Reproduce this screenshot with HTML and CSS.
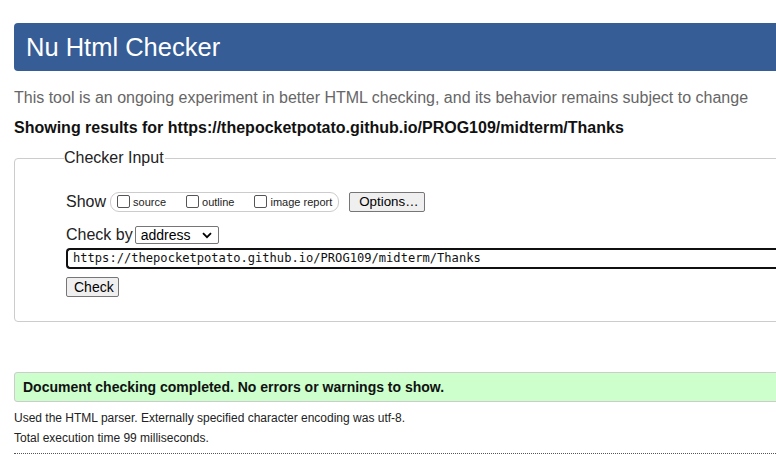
FILE: index.html
```html
<!DOCTYPE html>
<html>
<head>
<meta charset="utf-8">
<title>Nu Html Checker</title>
<link rel="stylesheet" href="styles.css">
</head>
<body>
<div class="page">
  <h1 class="banner">Nu Html Checker</h1>
  <p class="intro">This tool is an ongoing experiment in better HTML checking, and its behavior remains subject to change</p>
  <p class="showing">Showing results for https://thepocketpotato.github.io/PROG109/midterm/Thanks</p>
  <fieldset class="checker">
    <legend class="legend">Checker Input</legend>
    <div class="row show-row">
      <span class="label">Show</span>
      <span class="opts">
        <label class="opt"><span class="cb"></span>source</label>
        <label class="opt"><span class="cb"></span>outline</label>
        <label class="opt last"><span class="cb"></span>image report</label>
      </span>
      <span class="btn options-btn">Options…</span>
    </div>
    <div class="row by-row">
      <span class="label">Check by</span>
      <span class="select">address<svg class="chev" width="10" height="7" viewBox="0 0 10 7"><path d="M1 1.2 L5 5.2 L9 1.2" fill="none" stroke="#000" stroke-width="1.8"/></svg></span>
    </div>
    <div class="url">https://thepocketpotato.github.io/PROG109/midterm/Thanks</div>
    <span class="btn check-btn">Check</span>
  </fieldset>
  <div class="success">Document checking completed. No errors or warnings to show.</div>
  <p class="details first">Used the HTML parser. Externally specified character encoding was utf-8.</p>
  <p class="details">Total execution time 99 milliseconds.</p>
  <hr class="dots">
</div>
</body>
</html>
```

FILE: styles.css
```css
html, body {
  margin: 0;
  padding: 0;
  overflow: hidden;
  background: #fff;
}
body {
  font-family: "Liberation Sans", Arial, sans-serif;
  color: #000;
}
.page {
  width: 900px;
  padding: 23px 0 0 14px;
}
.banner {
  margin: 0;
  height: 48px;
  line-height: 48px;
  padding-left: 12px;
  background: #365d95;
  color: #fff;
  font-size: 25.5px;
  font-weight: normal;
  border-radius: 4px;
}
.intro {
  margin: 15px 0 0 0;
  font-size: 16px;
  line-height: 24px;
  color: #666;
}
.showing {
  margin: 7px 0 0 0;
  font-size: 16px;
  line-height: 22px;
  font-weight: bold;
  color: #111;
}
.checker {
  margin: 10px 0 0 0;
  border: 1px solid #ccc;
  border-radius: 4px;
  padding: 24px 0 24px 51px;
}
.legend {
  padding: 0 1px 0 0;
  margin-left: -2px;
  font-size: 16px;
  color: #222;
}
.row {
  display: flex;
  align-items: center;
}
.label {
  font-size: 16px;
  color: #222;
}
.show-row {
  height: 22px;
}
.opts {
  display: flex;
  align-items: center;
  margin-left: 4px;
  height: 18px;
  border: 1px solid #ccc;
  border-radius: 9px;
  padding: 0 6px 0 6px;
  font-size: 11px;
  color: #222;
}
.opt {
  display: flex;
  align-items: center;
  margin-right: 20px;
}
.opt.last {
  margin-right: 0;
}
.cb {
  display: inline-block;
  width: 11px;
  height: 11px;
  border: 1px solid #555;
  border-radius: 2px;
  margin-right: 3px;
  margin-top: -2px;
}
.btn {
  display: inline-block;
  box-sizing: border-box;
  height: 20px;
  line-height: 18px;
  border: 1px solid #767676;
  border-radius: 2px;
  background: #efefef;
  font-size: 13.33px;
  color: #000;
}
.options-btn {
  margin-left: 10px;
  padding: 0 9px;
  width: 76px;
}
.by-row {
  margin-top: 12px;
  height: 20px;
}
.select {
  display: inline-flex;
  align-items: center;
  justify-content: space-between;
  box-sizing: border-box;
  width: 84px;
  height: 18px;
  margin-left: 2px;
  padding: 0 6px 0 5px;
  border: 1px solid #767676;
  border-radius: 2px;
  font-size: 14px;
  color: #000;
}
.chev {
  display: block;
}
.url {
  margin-top: 3px;
  box-sizing: border-box;
  height: 21px;
  line-height: 17px;
  padding-left: 5px;
  border: 2px solid #101010;
  border-radius: 4px;
  border-right: none;
  font-family: "DejaVu Sans Mono", "Liberation Mono", monospace;
  font-size: 12.1px;
  color: #111;
}
.check-btn {
  display: block;
  margin-top: 8px;
  width: 53px;
  padding: 0 7px;
  font-size: 14px;
}
.success {
  margin-top: 50px;
  box-sizing: border-box;
  height: 30px;
  line-height: 28px;
  padding-left: 8px;
  background: #ccffcc;
  border: 1px solid #ccc;
  border-radius: 3px;
  font-size: 14px;
  font-weight: bold;
  color: #111;
}
.details {
  margin: 0;
  font-size: 12px;
  line-height: 20px;
  color: #222;
}
.details.first {
  margin-top: 6px;
}
.dots {
  margin: 5px 0 0 0;
  border: none;
  border-top: 1px dotted #555;
  height: 0;
}
```
